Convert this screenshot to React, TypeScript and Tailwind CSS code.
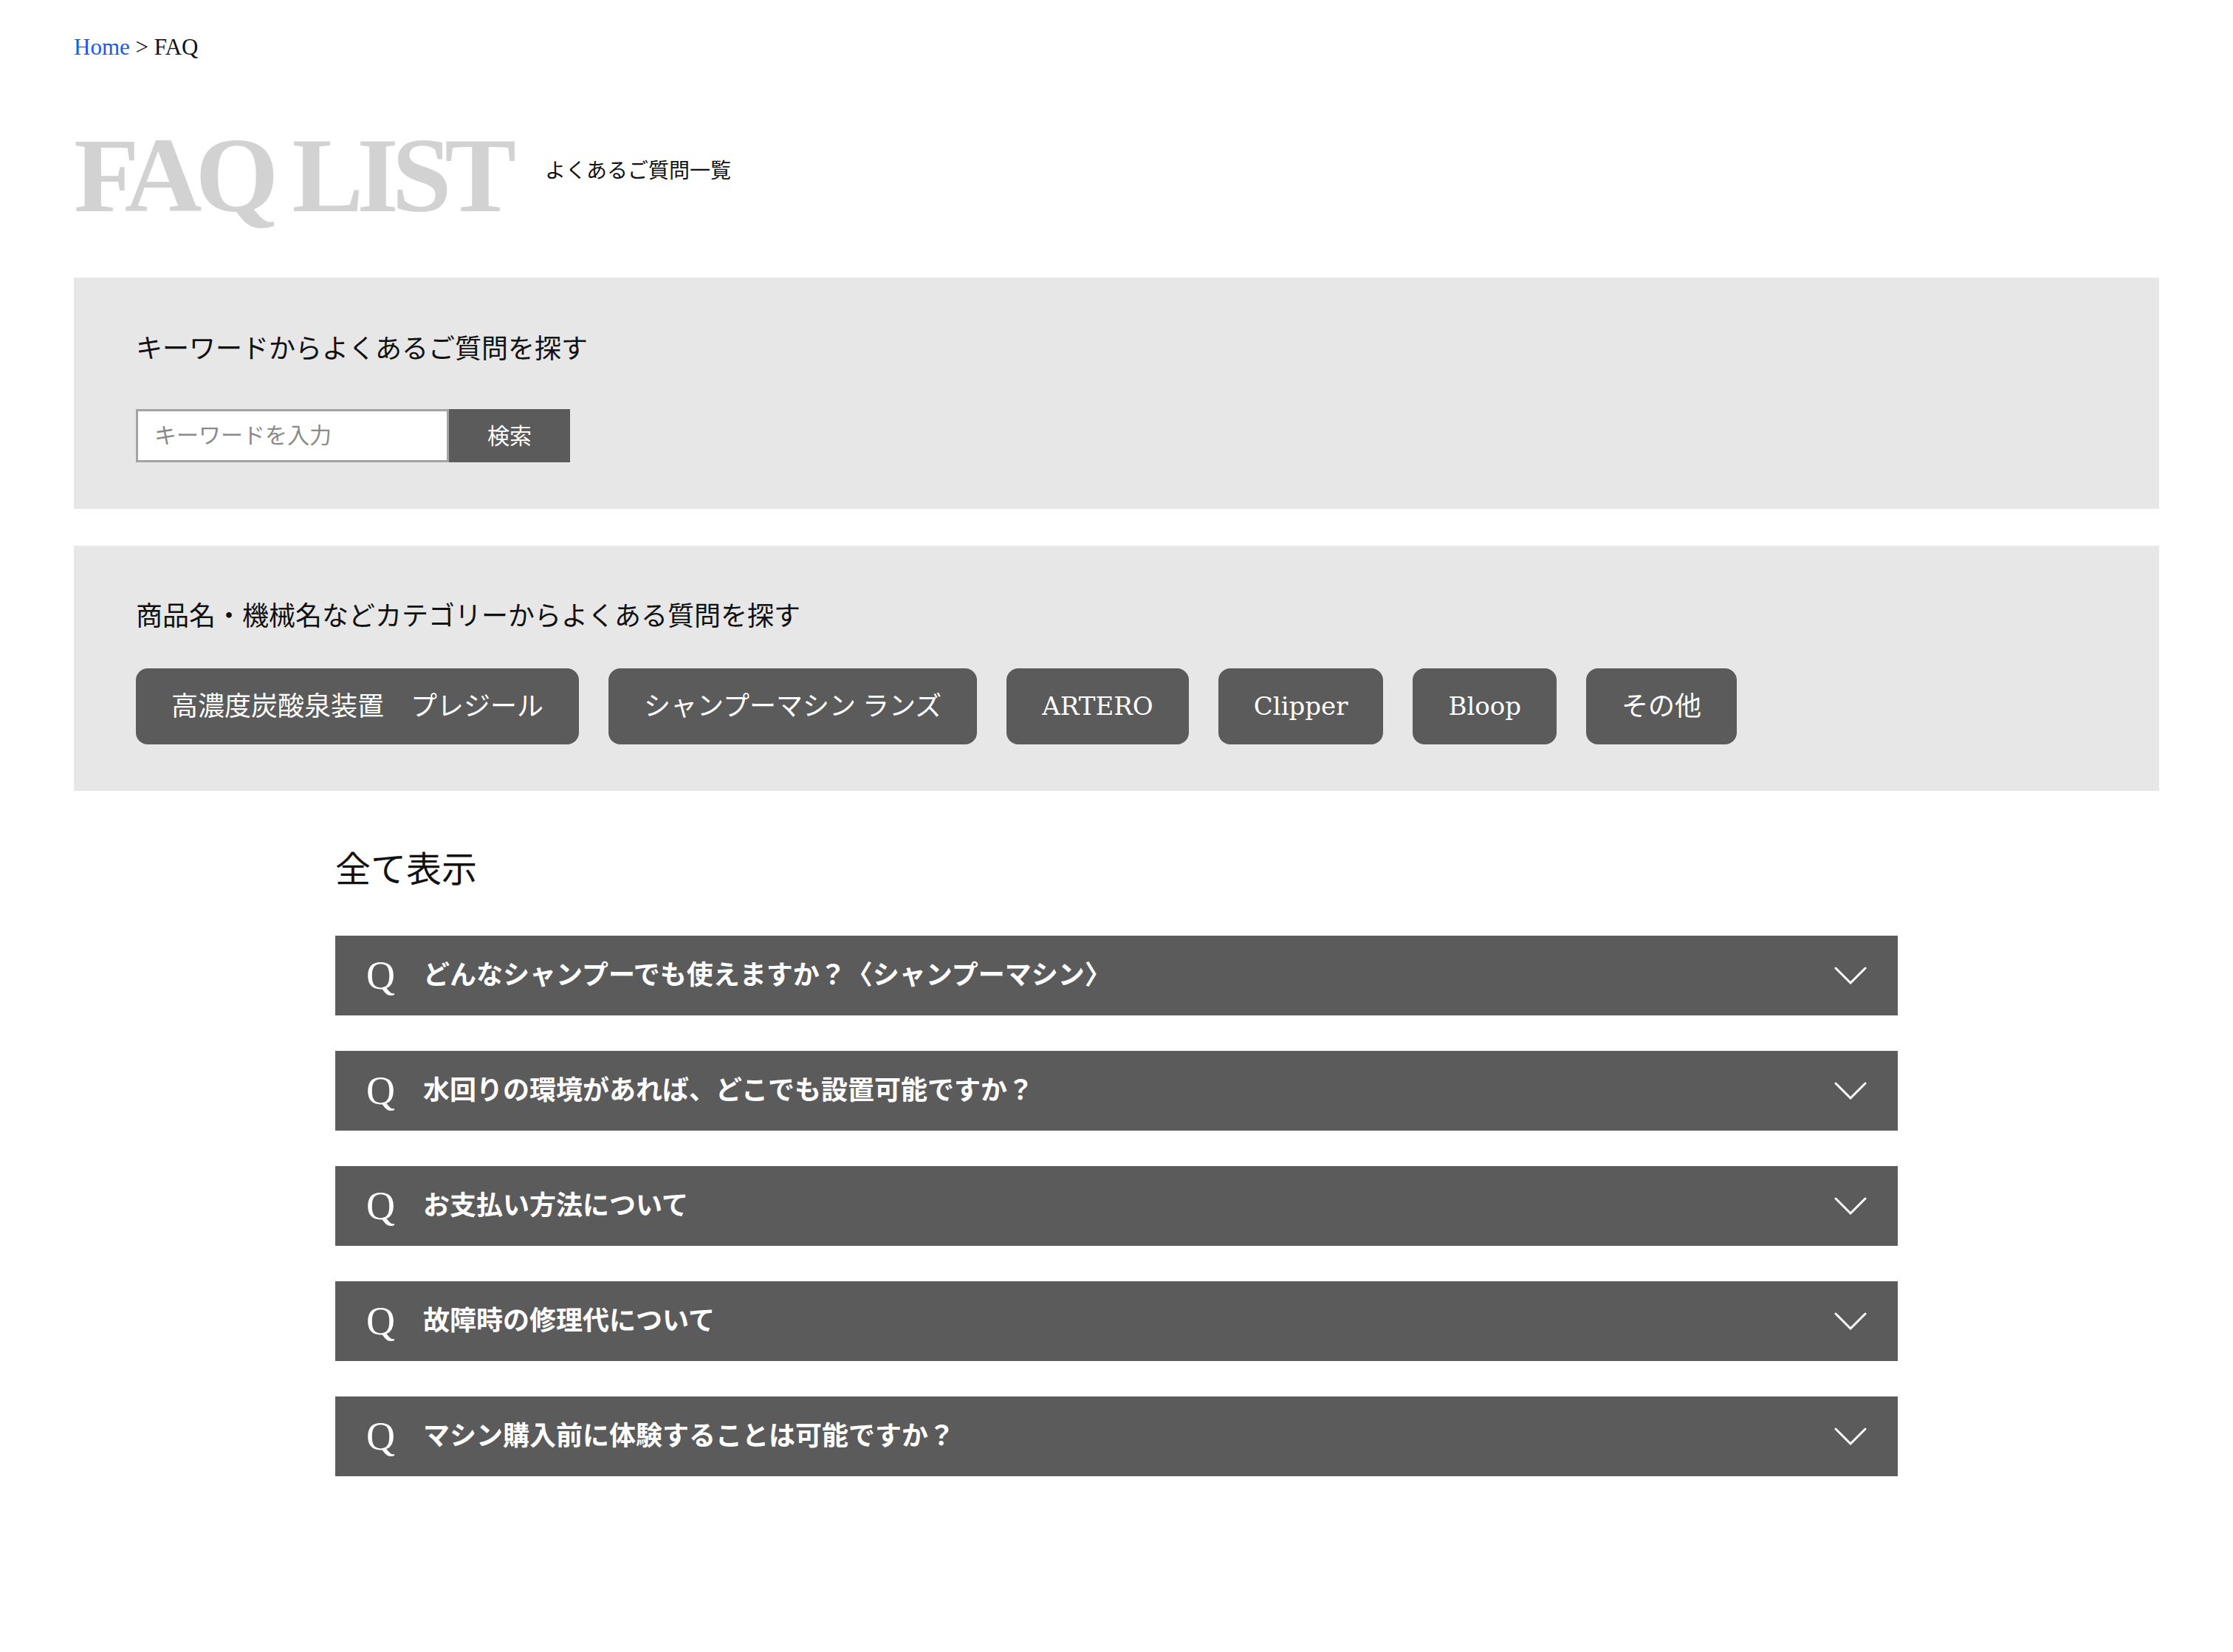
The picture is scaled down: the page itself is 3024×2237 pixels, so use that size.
const faqs = [
  "どんなシャンプーでも使えますか？〈シャンプーマシン〉",
  "水回りの環境があれば、どこでも設置可能ですか？",
  "お支払い方法について",
  "故障時の修理代について",
  "マシン購入前に体験することは可能ですか？",
];

const categories = [
  { label: "高濃度炭酸泉装置　プレジール", latin: false },
  { label: "シャンプーマシン ランズ", latin: false },
  { label: "ARTERO", latin: true },
  { label: "Clipper", latin: true },
  { label: "Bloop", latin: true },
  { label: "その他", latin: false },
];

function Chevron() {
  return (
    <svg width="44" height="24" viewBox="0 0 44 24" fill="none">
      <polyline
        points="2,2 22,22 42,2"
        stroke="#ffffff"
        strokeWidth="3"
        strokeLinecap="round"
        strokeLinejoin="miter"
      />
    </svg>
  );
}

function FaqRow({ question }: { question: string }) {
  return (
    <div className="flex h-[108px] items-center bg-[#5b5b5b] pl-[42px] pr-[42px] text-white">
      <span className="w-[37px] text-[54px] leading-none">Q</span>
      <span className="ml-[40px] flex-1 text-[36px] font-bold leading-none">
        {question}
      </span>
      <Chevron />
    </div>
  );
}

export default function App() {
  return (
    <div
      className="min-h-screen bg-white px-[100px] pb-[238px] pt-[46px] text-[#111]"
      style={{ fontFamily: '"Liberation Serif", "Noto Sans CJK JP", serif' }}
    >
      {/* breadcrumb */}
      <div className="text-[31px] leading-[36px]">
        <a className="text-[#1558ff]">Home</a> &gt; FAQ
      </div>

      {/* title */}
      <div className="mt-[83px] flex items-center gap-[48px]">
        <h1 className="text-[145px] font-bold leading-none tracking-[-9px] text-[#d2d2d2]">
          FAQ LIST
        </h1>
        <p className="mb-[12px] text-[28px] leading-none">よくあるご質問一覧</p>
      </div>

      {/* keyword search */}
      <section className="mt-[66px] bg-[#e7e7e7] px-[84px] pb-[63px] pt-[70px]">
        <h2 className="text-[36px] leading-[54px]">
          キーワードからよくあるご質問を探す
        </h2>
        <div className="mt-[54px] flex h-[72px]">
          <input
            type="text"
            placeholder="キーワードを入力"
            className="h-full w-[424px] border-[3px] border-[#a3a3a3] bg-white px-[22px] text-[30px] placeholder:text-[#8a8a8a]"
          />
          <button className="h-full w-[164px] bg-[#5b5b5b] text-[30px] text-white">
            検索
          </button>
        </div>
      </section>

      {/* category search */}
      <section className="mt-[50px] bg-[#e7e7e7] px-[84px] pb-[63px] pt-[69px]">
        <h2 className="text-[36px] leading-[54px]">
          商品名・機械名などカテゴリーからよくある質問を探す
        </h2>
        <div className="mt-[43px] flex gap-[40px]">
          {categories.map((c) =>
            c.latin ? (
              <button
                key={c.label}
                className="h-[103px] rounded-[16px] bg-[#5b5b5b] px-[48px] font-['DejaVu_Serif',serif] text-[34px] text-white"
              >
                {c.label}
              </button>
            ) : (
              <button
                key={c.label}
                className="h-[103px] whitespace-pre rounded-[16px] bg-[#5b5b5b] px-[48px] text-[36px] text-white"
              >
                {c.label}
              </button>
            ),
          )}
        </div>
      </section>

      {/* list */}
      <div className="mx-auto mt-[71px] w-[2116px]">
        <h3 className="text-[48px] leading-[72px]">全て表示</h3>
        <div className="mt-[53px] flex flex-col gap-[48px]">
          {faqs.map((q) => (
            <FaqRow key={q} question={q} />
          ))}
        </div>
      </div>
    </div>
  );
}
